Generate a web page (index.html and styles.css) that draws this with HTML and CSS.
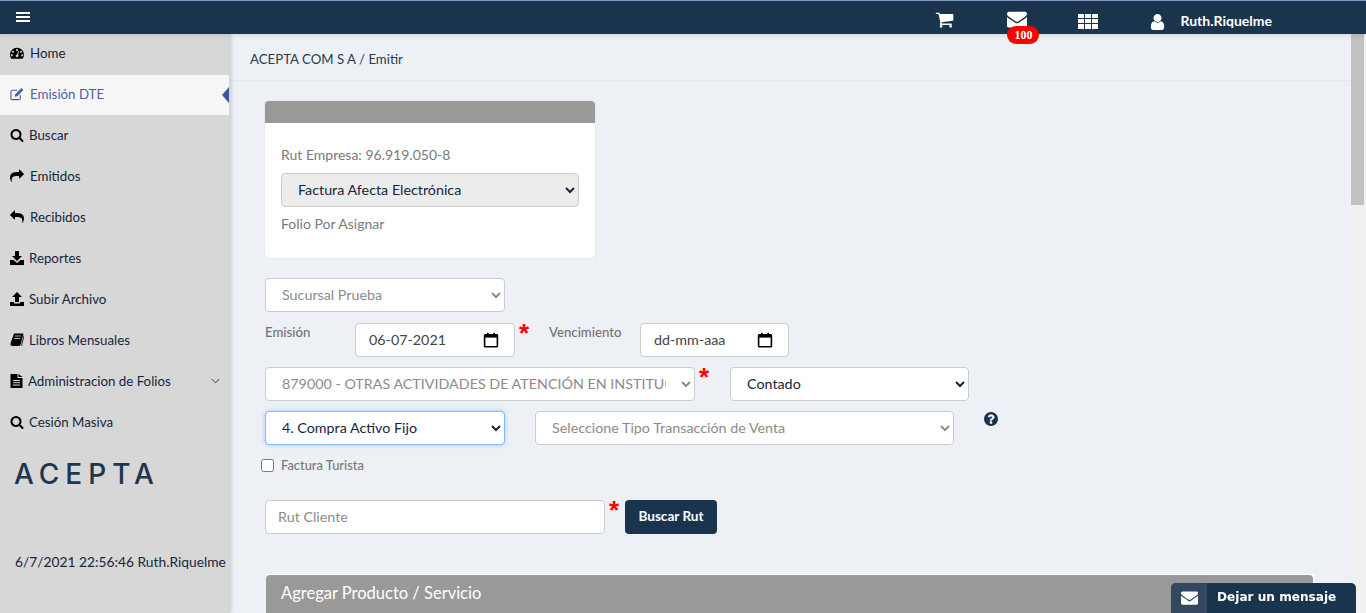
FILE: index.html
```html
<!DOCTYPE html>
<html lang="es">
<head>
    <meta charset="UTF-8">
    <meta name="viewport" content="width=device-width, initial-scale=1.0">
    <title>Emisión DTE</title>
    <link rel="stylesheet" href="styles.css">
</head>
<body>
    <svg class="icon-defs" width="0" height="0">
        <symbol id="i-search" viewBox="0 0 1792 1792"><path d="M1216 832q0-185-131.500-316.500t-316.500-131.500-316.500 131.500-131.500 316.500 131.500 316.500 316.500 131.500 316.500-131.500 131.500-316.500zm512 832q0 52-38 90t-90 38q-54 0-90-38l-343-342q-179 124-399 124-143 0-273.500-55.500t-225-150-150-225-55.500-273.500 55.500-273.500 150-225 225-150 273.500-55.500 273.500 55.500 225 150 150 225 55.500 273.500q0 220-124 399l343 343q37 37 37 90z"/></symbol>
        <symbol id="i-share" viewBox="0 0 1792 1792"><path d="M1792 640q0 26-19 45l-512 512q-19 19-45 19t-45-19-19-45v-256h-224q-98 0-175.500 6t-154 21.500-133 42.500-105.500 69.500-80 101-48.500 138.500-17.500 181q0 55 5 123 0 6 2.500 23.500t2.500 26.500q0 15-8.500 25t-23.500 10q-16 0-28-17-7-9-13-22t-13.500-30-10.500-24q-127-285-127-451 0-199 53-333 162-403 875-403h224v-256q0-26 19-45t45-19 45 19l512 512q19 19 19 45z"/></symbol>
        <symbol id="i-envelope" viewBox="0 0 1792 1792"><path d="M1792 710v794q0 66-47 113t-113 47h-1472q-66 0-113-47t-47-113v-794q44 49 101 87 362 246 497 345 57 42 92.500 65.500t94.500 48 110 24.500h2q51 0 110-24.500t94.500-48 92.500-65.500q170-123 498-345 57-39 100-87zm0-294q0 79-49 151t-122 123q-376 261-468 325-10 7-42.500 30.500t-54 38-52 32.500-57.500 27-50 9h-2q-23 0-50-9t-57.500-27-52-32.500-54-38-42.500-30.500q-91-64-262-182.500t-205-142.500q-62-42-117-115.500t-55-136.500q0-78 41.500-130t118.500-52h1472q65 0 112.500 47t47.500 113z"/></symbol>
        <symbol id="i-calendar" viewBox="0 0 20 20"><path d="M3 3.500h14a1 1 0 0 1 1 1v13a1 1 0 0 1-1 1H3a1 1 0 0 1-1-1v-13a1 1 0 0 1 1-1z" fill="none" stroke="currentColor" stroke-width="2"/><rect x="2" y="3" width="16" height="4"/><rect x="5" y="1" width="2" height="3"/><rect x="13" y="1" width="2" height="3"/></symbol>
    </svg>

    <header class="topbar">
        <svg class="bars" viewBox="0 0 14 10"><rect width="14" height="2"/><rect y="4" width="14" height="2"/><rect y="8" width="14" height="2"/></svg>
        <div class="top-actions">
            <svg class="top-cart" viewBox="0 0 1792 1792"><path d="M704 1536q0 52-38 90t-90 38-90-38-38-90 38-90 90-38 90 38 38 90zm896 0q0 52-38 90t-90 38-90-38-38-90 38-90 90-38 90 38 38 90zm128-1088v512q0 24-16.500 42.500t-40.500 21.500l-1044 122q13 60 13 70 0 16-24 64h920q26 0 45 19t19 45-19 45-45 19h-1024q-26 0-45-19t-19-45q0-11 8-31.500t16-36 21.500-40 15.500-29.500l-177-823h-204q-26 0-45-19t-19-45 19-45 45-19h256q16 0 28.500 6.500t19.500 15.500 13 24.500 8 26 5.500 29.500 4.500 26h1201q26 0 45 19t19 45z"/></svg>
            <div class="top-mail">
                <svg class="top-envelope"><use href="#i-envelope"/></svg>
                <span class="badge">100</span>
            </div>
            <svg class="top-grid" viewBox="0 0 20 15"><rect width="6" height="4"/><rect x="7" width="6" height="4"/><rect x="14" width="6" height="4"/><rect y="5" width="6" height="4"/><rect x="7" y="5" width="6" height="4"/><rect x="14" y="5" width="6" height="4"/><rect y="10" width="6" height="5"/><rect x="7" y="10" width="6" height="5"/><rect x="14" y="10" width="6" height="5"/></svg>
            <svg class="top-user" viewBox="256 128 1280 1536"><path d="M1536 1399q0 109-62.500 187t-150.500 78h-854q-88 0-150.500-78t-62.500-187q0-85 8.500-160.500t31.500-152 58.500-131 94-89 134.500-34.500q131 128 313 128t313-128q76 0 134.500 34.500t94 89 58.500 131 31.500 152 8.500 160.500zm-256-887q0 159-112.500 271.500t-271.500 112.500-271.500-112.500-112.500-271.500 112.500-271.500 271.500-112.500 271.500 112.500 112.500 271.500z"/></svg>
            <span class="top-name">Ruth.Riquelme</span>
        </div>
    </header>

    <div class="layout">
        <aside class="sidebar">
            <nav class="nav">
                <a class="nav-item">
                    <svg class="nav-icon" viewBox="0 0 16 14"><path fill-rule="evenodd" d="M8 1a8 8 0 0 0-8 8c0 1.800.6 3.300 1.500 4.500h13C15.400 12.300 16 10.800 16 9a8 8 0 0 0-8-8zM8 2.500a1.200 1.200 0 1 1 0 2.400 1.200 1.200 0 0 1 0-2.400zM3.500 4.300a1.200 1.200 0 1 1 0 2.400 1.200 1.200 0 0 1 0-2.400zM2 8.500a1.200 1.200 0 1 1 0 2.400 1.200 1.200 0 0 1 0-2.400zm12 0a1.200 1.200 0 1 1 0 2.400 1.200 1.200 0 0 1 0-2.400zM12.500 4.300a1.200 1.200 0 1 1 0 2.400 1.200 1.200 0 0 1 0-2.400zM8 8.600l1.600-3.800.8.300L9.200 9a1.500 1.500 0 1 1-1.200-.4z"/></svg>
                    Home
                </a>
                <a class="nav-item nav-item--active">
                    <svg class="nav-icon" viewBox="0 0 15 14"><path d="M11 8v3.500A1.500 1.500 0 0 1 9.500 13h-7A1.500 1.500 0 0 1 1 11.500v-7A1.500 1.500 0 0 1 2.500 3H8" fill="none" stroke="currentColor" stroke-width="1.200"/><path d="M12.300.6l2.100 2.100-6.600 6.600-2.800.7.700-2.800z"/></svg>
                    Emisión DTE
                </a>
                <a class="nav-item nav-item--tight">
                    <svg class="nav-icon"><use href="#i-search"/></svg>
                    Buscar
                </a>
                <a class="nav-item">
                    <svg class="nav-icon"><use href="#i-share"/></svg>
                    Emitidos
                </a>
                <a class="nav-item">
                    <svg class="nav-icon nav-icon--flip"><use href="#i-share"/></svg>
                    Recibidos
                </a>
                <a class="nav-item nav-item--tight">
                    <svg class="nav-icon" viewBox="0 0 14 14"><path d="M5 0h4v5h3L7 10 2 5h3z"/><path d="M0 9h3.500L7 12l3.500-3H14v5H0z"/></svg>
                    Reportes
                </a>
                <a class="nav-item nav-item--tight">
                    <svg class="nav-icon" viewBox="0 0 14 14"><path d="M7 0l5 5H9v5H5V5H2z"/><path d="M0 10h4v1.500h6V10h4v4H0z"/></svg>
                    Subir Archivo
                </a>
                <a class="nav-item nav-item--tight">
                    <svg class="nav-icon" viewBox="0 0 14 14"><path d="M4 .5h9.500L10.800 11c-.3 1.200-1 2-2.300 2H2.500C.9 13 .2 12 .5 10.500z"/><path d="M14 2.500L11.500 13" fill="none" stroke="currentColor" stroke-width=".8"/><path d="M4.800 3h6M4.200 5.500h6" stroke="#d7d7d7" stroke-width=".8"/></svg>
                    Libros Mensuales
                </a>
                <a class="nav-item nav-item--tight nav-item--sub">
                    <svg class="nav-icon nav-icon--file" viewBox="0 0 12 14"><path d="M0 0h7v4h5v10H0z"/><path d="M8 0l4 3H8z"/><path d="M2.500 6.500h7M2.500 8.700h7M2.500 11h7" stroke="#d7d7d7"/></svg>
                    Administracion de Folios
                    <svg class="nav-chevron" viewBox="0 0 10 6"><path d="M1 1l4 4 4-4" fill="none" stroke="currentColor" stroke-width="1.100"/></svg>
                </a>
                <a class="nav-item nav-item--tight">
                    <svg class="nav-icon"><use href="#i-search"/></svg>
                    Cesión Masiva
                </a>
            </nav>
            <div class="logo">ACEPTA</div>
            <div class="session">6/7/2021 22:56:46 Ruth.Riquelme</div>
        </aside>

        <main class="main">
            <div class="breadcrumb">ACEPTA COM S A / Emitir</div>
            <div class="content">
                <section class="doc-card">
                    <div class="doc-card-head"></div>
                    <div class="doc-card-body">
                        <div class="doc-rut">Rut Empresa: 96.919.050-8</div>
                        <select class="field field--gray">
                            <option>Factura Afecta Electrónica</option>
                        </select>
                        <div class="doc-folio">Folio Por Asignar</div>
                    </div>
                </section>

                <form class="emit-form">
                    <div class="form-row">
                        <select class="field field--muted field--branch">
                            <option>Sucursal Prueba</option>
                        </select>
                    </div>
                    <div class="form-row">
                        <label class="date-label date-label--issue">Emisión</label>
                        <div class="date-field date-field--issue">
                            <input class="date-input" type="text" value="06-07-2021">
                            <svg class="date-icon"><use href="#i-calendar"/></svg>
                        </div>
                        <span class="required">*</span>
                        <label class="date-label date-label--due">Vencimiento</label>
                        <div class="date-field date-field--due">
                            <input class="date-input" type="text" value="dd-mm-aaa">
                            <svg class="date-icon"><use href="#i-calendar"/></svg>
                        </div>
                    </div>
                    <div class="form-row">
                        <select class="field field--muted field--activity">
                            <option>879000 - OTRAS ACTIVIDADES DE ATENCIÓN EN INSTITUCIONES</option>
                        </select>
                        <span class="required">*</span>
                        <select class="field field--payment">
                            <option>Contado</option>
                        </select>
                    </div>
                    <div class="form-row">
                        <select class="field field--focus field--purchase">
                            <option>4. Compra Activo Fijo</option>
                        </select>
                        <select class="field field--muted field--sale">
                            <option>Seleccione Tipo Transacción de Venta</option>
                        </select>
                        <svg class="help-icon" viewBox="128 128 1536 1536"><path d="M1024 1376v-192q0-14-9-23t-23-9h-192q-14 0-23 9t-9 23v192q0 14 9 23t23 9h192q14 0 23-9t9-23zm256-672q0-88-55.500-163t-138.500-116-170-41q-243 0-371 213-15 24 8 42l132 100q7 6 19 6 16 0 25-12 53-68 86-92 34-24 86-24 48 0 85.500 26t37.500 59q0 38-20 61t-68 45q-63 28-115.500 86.500t-52.500 125.500v36q0 14 9 23t23 9h192q14 0 23-9t9-23q0-19 21.500-49.500t54.500-49.500q32-18 49-28.500t46-35 44.500-48 28-60.500 12.500-81zm384 192q0 209-103 385.500t-279.500 279.500-385.500 103-385.500-103-279.500-279.500-103-385.500 103-385.500 279.500-279.500 385.500-103 385.500 103 279.500 279.500 103 385.500z"/></svg>
                    </div>
                    <label class="tourist">
                        <input class="tourist-check" type="checkbox">
                        Factura Turista
                    </label>
                    <div class="form-row form-row--client">
                        <input class="field field--client" type="text" placeholder="Rut Cliente">
                        <span class="required">*</span>
                        <button class="btn-search" type="button">Buscar Rut</button>
                    </div>
                </form>

                <section class="product-panel">
                    <div class="product-head">Agregar Producto / Servicio</div>
                </section>
            </div>
        </main>
        <div class="scrollbar"><div class="scrollbar-thumb"></div></div>
    </div>

    <div class="message-tab">
        <span class="message-icon"><svg class="message-svg"><use href="#i-envelope"/></svg></span>
        <span class="message-text">Dejar un mensaje</span>
    </div>
</body>
</html>
```

FILE: styles.css
```css
* {
    box-sizing: border-box;
}
html, body {
    height: 100%;
}
body {
    margin: 0;
    overflow: hidden;
    display: flex;
    flex-direction: column;
    font-family: 'Lato', 'Open Sans', sans-serif;
    font-size: 14px;
    color: #212529;
    background: #edf0f5;
}
svg {
    fill: currentColor;
    display: block;
    flex: none;
}
.icon-defs {
    position: absolute;
}

/* top bar */
.topbar {
    flex: none;
    position: relative;
    z-index: 2;
    height: 34px;
    display: flex;
    align-items: flex-start;
    justify-content: space-between;
    background: #1a344d;
    border-top: 1px solid #8297c8;
    box-shadow: 0 1px 5px rgba(0, 0, 0, 0.12);
    color: #fff;
    padding: 0 94px 0 16px;
}
.bars {
    width: 14px;
    height: 10px;
    margin-top: 11px;
}
.top-actions {
    display: flex;
    align-items: flex-start;
}
.top-cart {
    width: 19px;
    height: 19px;
    margin-top: 9px;
}
.top-mail {
    position: relative;
    margin-left: 53px;
}
.top-envelope {
    width: 20px;
    height: 20px;
    margin-top: 8px;
}
.badge {
    position: absolute;
    top: 25px;
    left: 0;
    width: 32px;
    height: 18px;
    border-radius: 9px;
    background: #f00;
    color: #fff;
    font: bold 12px/18px 'Liberation Serif', serif;
    text-align: center;
}
.top-grid {
    width: 20px;
    height: 15px;
    margin: 13px 0 0 51px;
}
.top-user {
    width: 15px;
    height: 16px;
    margin: 13px 0 0 52px;
}
.top-name {
    margin-left: 15px;
    font-size: 14px;
    font-weight: 700;
    line-height: 40px;
    height: 33px;
}

.layout {
    flex: 1;
    min-height: 0;
    display: flex;
}

/* sidebar */
.sidebar {
    flex: none;
    width: 230px;
    position: relative;
    z-index: 1;
    background: #d7d7d7;
    box-shadow: 1px 0 4px rgba(0, 0, 0, 0.18);
}
.nav-item {
    height: 41px;
    display: flex;
    align-items: center;
    gap: 6px;
    padding: 0 0 2px 10px;
    font-size: 13.300px;
    color: #17263a;
}
.nav-item:first-child {
    padding-bottom: 4px;
}
.nav-item--tight {
    gap: 5px;
}
.nav-item--active {
    position: relative;
    width: 229px;
    height: 40px;
    background: #f7f7f7;
    color: #4a5f9e;
}
.nav-item--active::after {
    content: "";
    position: absolute;
    right: 0;
    top: 12px;
    border: 8px solid transparent;
    border-left: 0;
    border-right: 7px solid #3c5a9a;
}
.nav-item--sub {
    padding-right: 10px;
}
.nav-icon {
    width: 14px;
    height: 14px;
    color: #000;
}
.nav-item--active .nav-icon {
    color: #4a5f9e;
}
.nav-icon--flip {
    transform: scaleX(-1);
}
.nav-icon--file {
    width: 13px;
}
.nav-chevron {
    width: 9px;
    height: 6px;
    margin-left: auto;
    color: #333;
}
.logo {
    margin: 13px 0 0 14px;
    font-family: 'Inter', sans-serif;
    font-size: 28px;
    font-weight: 500;
    line-height: 36px;
    letter-spacing: 6px;
    color: #1c3650;
}
.session {
    margin: 61px 0 0 15px;
    font-size: 13.800px;
    color: #17263a;
    white-space: nowrap;
}

/* main */
.main {
    flex: 1;
    min-width: 0;
    overflow: hidden;
}
.scrollbar {
    flex: none;
    width: 15px;
    background: #f1f1f1;
}
.scrollbar-thumb {
    width: 13px;
    height: 171px;
    background: #c1c1c1;
}
.breadcrumb {
    height: 47px;
    padding: 17px 0 0 20px;
    font-size: 13.250px;
    line-height: 17px;
    color: #2b3b4a;
    border-bottom: 1px solid #e6e8ec;
}
.content {
    padding: 20px 37px 0 35px;
}

/* card */
.doc-card {
    width: 330px;
    height: 157px;
    background: #fff;
    border-radius: 4px;
    box-shadow: 0 0 2px rgba(0, 0, 0, 0.1);
    overflow: hidden;
}
.doc-card-head {
    height: 22px;
    background: #999;
}
.doc-card-body {
    padding: 22px 16px 0;
    color: #7a7a7a;
}
.doc-rut {
    font-size: 14px;
    line-height: 20px;
    margin-bottom: 8px;
}
.doc-folio {
    font-size: 14px;
    line-height: 20px;
    margin-top: 7px;
}

/* form */
.field {
    display: block;
    height: 34px;
    padding: 0 12px 2px;
    border: 1px solid #ccc;
    border-radius: 4px;
    background-color: #fff;
    font-family: inherit;
    font-size: 14.300px;
    color: #17263a;
    outline: none;
}
.field--gray {
    width: 298px;
    background-color: #ececec;
}
.field--muted {
    color: #8b8b8b;
}
.field--focus {
    border-color: #80bdff;
    box-shadow: 0 0 4px rgba(0, 123, 255, 0.35);
}
.field--branch {
    width: 240px;
}
.field--activity {
    width: 430px;
}
.field--payment {
    width: 239px;
    margin-left: 21px;
}
.field--purchase {
    width: 240px;
}
.field--sale {
    width: 419px;
    margin-left: 30px;
}
.field--client {
    width: 340px;
}
.field--client::placeholder {
    color: #8b8b8b;
}
.emit-form {
    margin-top: 20px;
}
.form-row {
    display: flex;
    align-items: flex-start;
    margin-bottom: 10px;
}
.form-row:first-child {
    margin-bottom: 11px;
}
.date-label {
    font-size: 13.200px;
    font-weight: 500;
    line-height: 18px;
    color: #727272;
}
.date-label--issue {
    width: 90px;
}
.date-label--due {
    width: 91px;
    margin-left: 20px;
}
.date-field {
    height: 34px;
    display: flex;
    align-items: center;
    background: #fff;
    border: 1px solid #ccc;
    border-radius: 4px;
    padding: 0 15px 0 13px;
}
.date-field--issue {
    width: 160px;
}
.date-field--due {
    width: 149px;
}
.date-input {
    flex: 1;
    min-width: 0;
    border: 0;
    padding: 0 0 2px;
    outline: none;
    font-family: inherit;
    font-size: 14.300px;
    color: #444;
}
.date-icon {
    width: 16px;
    height: 16px;
    color: #000;
}
.required {
    width: 10px;
    height: 23px;
    margin-left: 4px;
    font-family: 'Liberation Sans', sans-serif;
    font-size: 26px;
    font-weight: 700;
    line-height: 20px;
    color: #f00;
}
.help-icon {
    width: 14px;
    height: 14px;
    margin: 1px 0 0 30px;
    color: #1a344d;
}
.tourist {
    display: flex;
    align-items: center;
    gap: 7px;
    margin: 13px 0 0 -4px;
    height: 14px;
    font-size: 12.900px;
    font-weight: 500;
    color: #7a7a7a;
}
.tourist-check {
    width: 13px;
    height: 13px;
    margin: 0;
}
.form-row--client {
    margin: 28px 0 0;
}
.btn-search {
    height: 34px;
    width: 92px;
    margin-left: 6px;
    padding: 0 0 2px;
    border: 0;
    border-radius: 4px;
    background: #1a344d;
    color: #fff;
    font-family: inherit;
    font-size: 13.600px;
    font-weight: 700;
}
.product-panel {
    margin: 40px 0 0 1px;
    padding: 1px 1px 0 0;
    background: #fff;
}
.product-head {
    height: 300px;
    padding: 8px 15px;
    border-radius: 4px 4px 0 0;
    background: #999;
    color: #fff;
    font-size: 16.500px;
    line-height: 20px;
}

/* message tab */
.message-tab {
    position: fixed;
    left: 1171px;
    bottom: 0;
    width: 185px;
    height: 30px;
    display: flex;
    border-radius: 5px 5px 0 0;
    background: #1a344d;
    overflow: hidden;
    color: #fff;
}
.message-icon {
    width: 36px;
    padding-bottom: 2px;
    display: flex;
    align-items: center;
    justify-content: center;
    background: #33475f;
}
.message-svg {
    width: 17px;
    height: 17px;
}
.message-text {
    margin-left: 10px;
    font-family: 'DejaVu Sans', sans-serif;
    font-size: 12.100px;
    font-weight: 700;
    line-height: 28px;
}
```
